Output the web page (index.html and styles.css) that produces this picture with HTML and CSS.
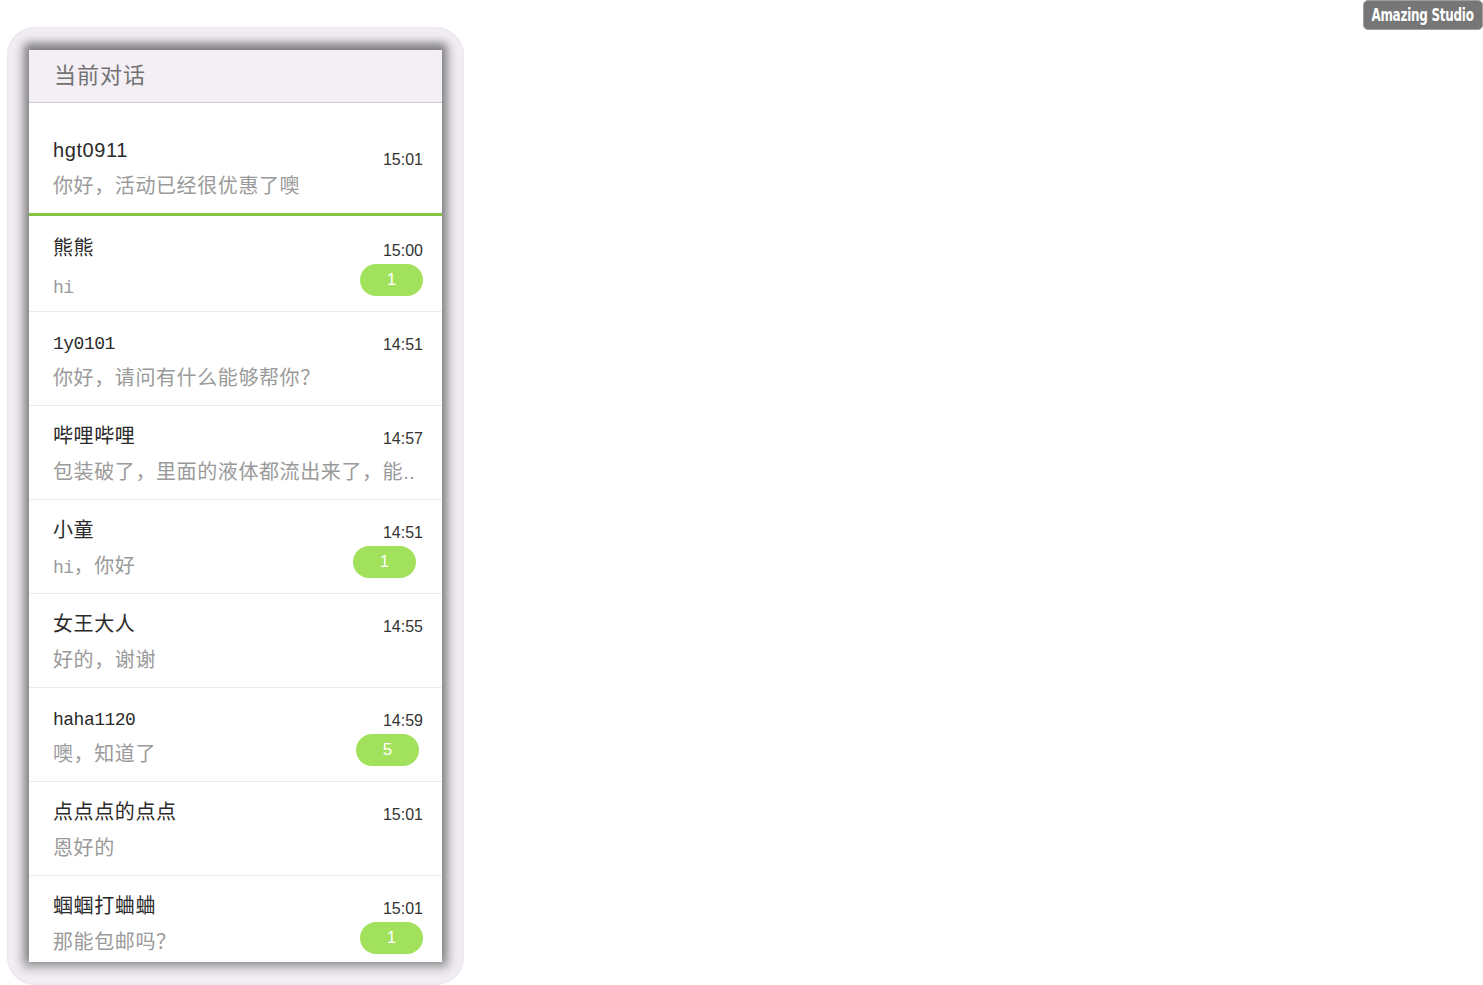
FILE: index.html
```html
<!DOCTYPE html>
<html lang="zh-CN">
<head>
<meta charset="utf-8">
<title>当前对话</title>
<link rel="stylesheet" href="styles.css">
</head>
<body>
<div class="watermark"><span class="watermark-text">Amazing Studio</span></div>
<div class="frame">
  <div class="panel">
    <div class="header">当前对话</div>
    <ul class="list">
      <li class="item active">
        <div class="left">
          <div class="name">hgt0911</div>
          <div class="msg">你好，活动已经很优惠了噢</div>
        </div>
        <div class="right">
          <div class="time">15:01</div>
        </div>
      </li>
      <li class="item tall">
        <div class="left">
          <div class="name">熊熊</div>
          <div class="msg"><span class="latin">hi</span></div>
        </div>
        <div class="right">
          <div class="time">15:00</div>
          <div class="badge">1</div>
        </div>
      </li>
      <li class="item">
        <div class="left">
          <div class="name"><span class="latin">1y0101</span></div>
          <div class="msg">你好，请问有什么能够帮你？</div>
        </div>
        <div class="right">
          <div class="time">14:51</div>
        </div>
      </li>
      <li class="item">
        <div class="left">
          <div class="name">哔哩哔哩</div>
          <div class="msg">包装破了，里面的液体都流出来了，能..</div>
        </div>
        <div class="right">
          <div class="time">14:57</div>
        </div>
      </li>
      <li class="item">
        <div class="left">
          <div class="name">小童</div>
          <div class="msg"><span class="latin">hi</span>，你好</div>
        </div>
        <div class="right">
          <div class="time">14:51</div>
          <div class="badge shift-7">1</div>
        </div>
      </li>
      <li class="item">
        <div class="left">
          <div class="name">女王大人</div>
          <div class="msg">好的，谢谢</div>
        </div>
        <div class="right">
          <div class="time">14:55</div>
        </div>
      </li>
      <li class="item">
        <div class="left">
          <div class="name"><span class="latin">haha1120</span></div>
          <div class="msg">噢，知道了</div>
        </div>
        <div class="right">
          <div class="time">14:59</div>
          <div class="badge shift-4">5</div>
        </div>
      </li>
      <li class="item">
        <div class="left">
          <div class="name">点点点的点点</div>
          <div class="msg">恩好的</div>
        </div>
        <div class="right">
          <div class="time">15:01</div>
        </div>
      </li>
      <li class="item">
        <div class="left">
          <div class="name">蝈蝈打蛐蛐</div>
          <div class="msg">那能包邮吗？</div>
        </div>
        <div class="right">
          <div class="time">15:01</div>
          <div class="badge">1</div>
        </div>
      </li>
    </ul>
  </div>
</div>
</body>
</html>
```

FILE: styles.css
```css
html, body {
  margin: 0;
  padding: 0;
  background: #ffffff;
}

body {
  padding: 27px 0 0 7px;
  font-family: "Liberation Sans", "Noto Sans CJK SC", sans-serif;
  height: 985px;
  box-sizing: border-box;
  overflow: hidden;
  position: relative;
}

.watermark {
  position: absolute;
  top: 0;
  right: 0;
  width: 120px;
  height: 30px;
  box-sizing: border-box;
  background: #767676;
  border: 1px solid #a0a0a0;
  border-radius: 5px;
  display: flex;
  align-items: center;
  justify-content: center;
  overflow: hidden;
}

.watermark-text {
  display: inline-block;
  white-space: nowrap;
  color: #ffffff;
  font-family: "DejaVu Sans Condensed", "DejaVu Sans", sans-serif;
  font-weight: bold;
  font-size: 17px;
  letter-spacing: -0.3px;
  transform: scaleX(0.78);
}

.frame {
  width: 413px;
  padding: 23px 22px;
  border-radius: 28px;
  background: #f3eff5;
  box-shadow: inset 0 0 3px 1px #e9e4eb;
}

.panel {
  height: 912px;
  overflow: hidden;
  background: #ffffff;
  box-shadow: 0 -3px 8px 3px rgba(70, 70, 70, 0.5), 0 0 10px 7px rgba(110, 110, 110, 0.45);
}

.header {
  height: 52px;
  line-height: 52px;
  padding-left: 25px;
  background: #f3eff5;
  border-bottom: 1px solid #cdc7cf;
  color: #727272;
  font-size: 22px;
  letter-spacing: 1px;
}

.list {
  list-style: none;
  margin: 0;
  padding: 0;
}

.item {
  display: flex;
  padding: 16px 19px 13px 24px;
  border-bottom: 1px solid #efeaf0;
}

.item.active {
  padding-top: 33px;
  border-bottom: 3px solid #84c441;
}

.item.tall {
  padding-top: 18px;
  padding-bottom: 11px;
}

.item.tall .msg {
  margin-top: 10px;
}

.left {
  flex: 1;
  min-width: 0;
}

.name {
  height: 28px;
  font-size: 20px;
  line-height: 28px;
  color: #2a2a2a;
  letter-spacing: 0.6px;
}

.msg {
  height: 28px;
  margin-top: 8px;
  font-size: 20px;
  line-height: 28px;
  color: #9a9a9a;
  white-space: nowrap;
  letter-spacing: 0.6px;
}

.latin {
  font-family: "Liberation Mono", monospace;
  font-size: 18px;
  line-height: 20px;
  letter-spacing: -0.5px;
}

.right {
  display: flex;
  flex-direction: column;
  align-items: flex-end;
  padding-top: 7px;
}

.active .right {
  padding-top: 14px;
}

.time {
  font-size: 16px;
  line-height: 20px;
  color: #333333;
}

.badge {
  margin-top: 3px;
  width: 63px;
  height: 32px;
  line-height: 32px;
  border-radius: 16px;
  background: #a2e15b;
  color: #ffffff;
  font-size: 17px;
  text-align: center;
}

.badge.shift-7 {
  margin-right: 7px;
}

.badge.shift-4 {
  margin-right: 4px;
}
```
